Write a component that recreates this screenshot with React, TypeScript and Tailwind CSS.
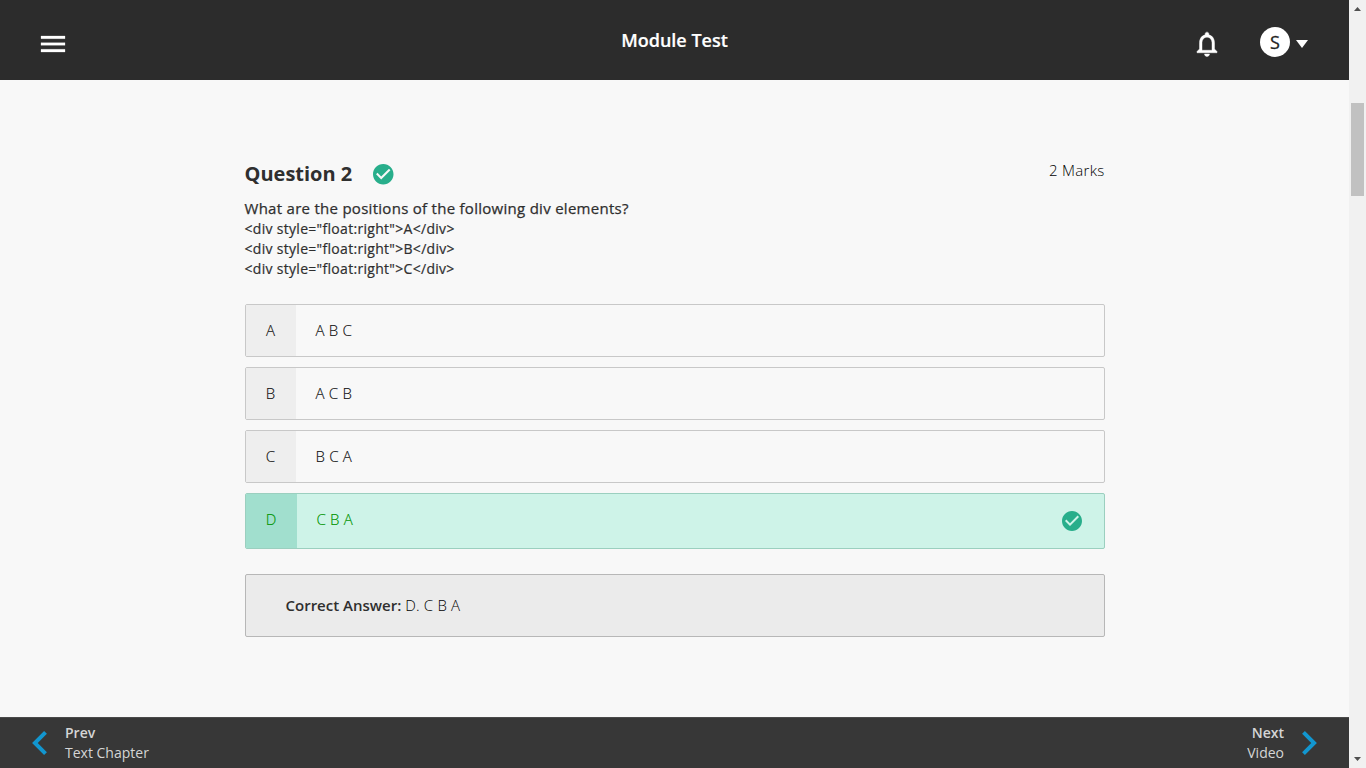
import React from "react";

const CheckCircle = ({ className }: { className: string }) => (
  <svg viewBox="2 2 20 20" className={className} fill="#28ae8b">
    <path d="M12 2C6.48 2 2 6.48 2 12s4.48 10 10 10 10-4.48 10-10S17.52 2 12 2zm-2 15l-5-5 1.41-1.41L10 14.17l7.59-7.59L19 8l-9 9z" />
  </svg>
);

const options = [
  { key: "A", text: "A B C" },
  { key: "B", text: "A C B" },
  { key: "C", text: "B C A" },
];

const Header = () => (
  <header className="grid h-20 shrink-0 grid-cols-3 bg-[#2c2c2c] text-white">
    <svg viewBox="0 0 24 24" className="mt-7 ml-[37px] size-8" fill="currentColor" stroke="currentColor" strokeWidth="0.2">
      <path d="M3 18h18v-2H3v2zm0-5h18v-2H3v2zm0-7v2h18V6H3z" />
    </svg>
    <h1 className="pt-[27px] text-center text-[18px] leading-[27px] font-semibold [-webkit-text-stroke:0.2px]">Module Test</h1>
    <div className="flex justify-end pr-[41px]">
      <svg viewBox="0 0 24 24" className="mt-[28.5px] size-[30px]" fill="currentColor" stroke="currentColor" strokeWidth="0.35">
        <path d="M12 22c1.1 0 2-.9 2-2h-4c0 1.1.9 2 2 2zm6-6v-5c0-3.07-1.63-5.64-4.5-6.32V4c0-.83-.67-1.5-1.5-1.5s-1.5.67-1.5 1.5v.68C7.64 5.36 6 7.92 6 11v5l-2 2v1h16v-1l-2-2zm-2 1H8v-6c0-2.48 1.51-4.5 4-4.5s4 2.02 4 4.5v6z" />
      </svg>
      <div className="mt-[27px] ml-[38px] size-[30px] rounded-full bg-white text-center text-[18px] leading-[31px] text-[#222] [-webkit-text-stroke:0.3px]">S</div>
      <svg viewBox="0 0 12 8" className="mt-10 ml-1.5 h-2 w-3" fill="currentColor">
        <path d="M0 0h12L6 8z" />
      </svg>
    </div>
  </header>
);

const Footer = () => (
  <footer className="flex h-[51px] shrink-0 justify-between border-t border-[#4a4a4a] bg-[#373737] pt-[5px] text-[14px] leading-5 text-[#d5d5d5]">
    <div className="flex">
      <svg viewBox="8 6 7.41 12" className="mt-2 ml-8 h-6 w-[15px]" fill="#1296cf">
        <path d="M15.41 7.41L14 6l-6 6 6 6 1.41-1.41L10.83 12z" />
      </svg>
      <div className="ml-[18px]">
        <div className="font-semibold">Prev</div>
        <div>Text Chapter</div>
      </div>
    </div>
    <div className="flex pr-8">
      <div className="text-right">
        <div className="font-semibold">Next</div>
        <div>Video</div>
      </div>
      <svg viewBox="8.59 6 7.41 12" className="mt-2 ml-[18px] h-6 w-[15px]" fill="#1296cf">
        <path d="M10 6L8.59 7.41 13.17 12l-4.58 4.59L10 18l6-6z" />
      </svg>
    </div>
  </footer>
);

const Scrollbar = () => (
  <div className="flex w-[17px] shrink-0 flex-col items-center bg-[#f1f1f1]">
    <svg viewBox="0 0 7 4" className="mt-[7px] h-1 w-[7px]" fill="#505050">
      <path d="M0 4h7L3.5 0z" />
    </svg>
    <div className="mt-[92px] h-[93px] w-[13px] bg-[#c1c1c1]" />
    <svg viewBox="0 0 7 4" className="mt-auto mb-[7px] h-1 w-[7px]" fill="#505050">
      <path d="M0 0h7L3.5 4z" />
    </svg>
  </div>
);

export default function App() {
  return (
    <div className="flex h-screen overflow-hidden bg-[#f8f8f8] font-['Open_Sans',sans-serif] text-[#2f2f2f]">
      <div className="flex min-w-0 flex-1 flex-col">
        <Header />
        <main className="min-h-0 flex-1 pt-20 pl-[244.5px]">
          <div className="w-[860px]">
            <div className="flex">
              <h2 className="text-[20px] leading-7 font-bold">Question 2</h2>
              <CheckCircle className="mt-1 ml-[21px] size-[20.5px]" />
              <span className="ml-auto text-[15px] leading-[21px] font-light tracking-[0.3px] text-black">2 Marks</span>
            </div>
            <div className="mt-2.5 text-[15px] leading-[21px] tracking-[0.28px] [-webkit-text-stroke:0.25px]">What are the positions of the following div elements?</div>
            <div className="text-[14px] leading-5 tracking-[0.3px] [-webkit-text-stroke:0.2px]">
              <div>{'<div style="float:right">A</div>'}</div>
              <div>{'<div style="float:right">B</div>'}</div>
              <div>{'<div style="float:right">C</div>'}</div>
            </div>
            <div className="mt-[25px] flex flex-col gap-2.5 text-[15px] font-light [-webkit-text-stroke:0.15px]">
              {options.map((o) => (
                <div key={o.key} className="flex h-[53px] overflow-hidden rounded-xs border border-[#c8c8c8] leading-[51px] text-[#111]">
                  <div className="w-[50px] bg-[#eee] text-center">{o.key}</div>
                  <div className="pl-5 tracking-[0.2px]">{o.text}</div>
                </div>
              ))}
              <div className="flex h-14 overflow-hidden rounded-xs border border-[#9bcfbf] bg-[#cef3e8] leading-[51px] text-[#009400]">
                <div className="w-[51px] bg-[#a1dfce] text-center">D</div>
                <div className="pl-5 tracking-[0.2px]">C B A</div>
                <CheckCircle className="mt-[17px] mr-[22px] ml-auto size-[20px]" />
              </div>
            </div>
            <div className="mt-[25px] h-[63px] rounded-xs border border-[#b7b7b7] bg-[#ebebeb] pl-10 text-[15px] leading-[61px] font-light text-black">
              <span className="font-semibold text-[#2f2f2f]">Correct Answer:</span> <span className="tracking-[0.2px]">D. C B A</span>
            </div>
          </div>
        </main>
        <Footer />
      </div>
      <Scrollbar />
    </div>
  );
}
